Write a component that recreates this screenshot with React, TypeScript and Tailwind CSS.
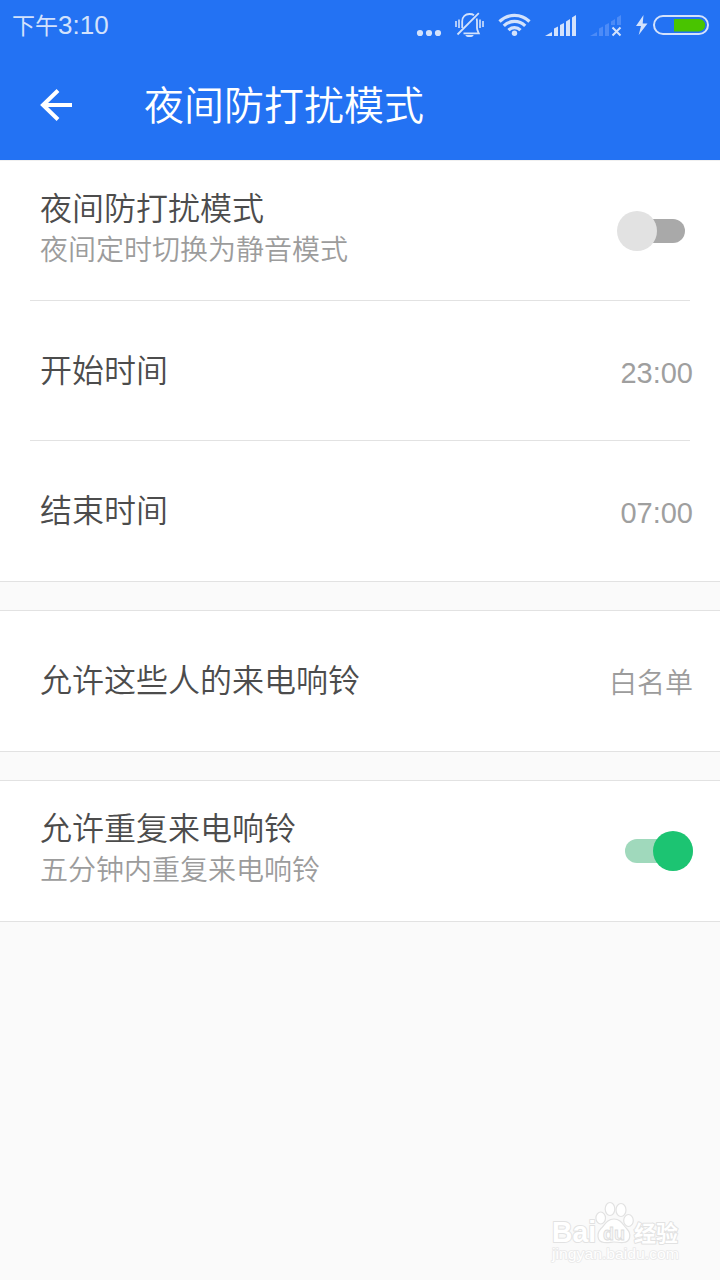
import React from "react";

function StatusIcons() {
  return (
    <svg width="304" height="50" viewBox="416 0 304 50" fill="none" className="shrink-0">
      <g fill="#d3e2fc">
        <circle cx="420" cy="33" r="3.1" />
        <circle cx="429" cy="33" r="3.1" />
        <circle cx="438" cy="33" r="3.1" />
        <path d="M465.5 35h8a4 2 0 0 1-8 0z" />
      </g>
      <g stroke="#d3e2fc" strokeWidth="1.8">
        <path d="M462.2 28V21.5C462.2 16.5 465.5 14 469.5 14c2 0 3.5.4 4.5 1.2M476.6 18.500c.3 1 .4 2 .4 3v6.500c0 2 1 3.500 1.800 5.300H463.500" />
        <path d="M457.5 34.5L478.800 13.200" />
        <path d="M456 21v6M459 19.500v8.500M480 19.500v8.500M483 21v6" strokeWidth="1.6" />
      </g>
      <circle cx="514.5" cy="33.300" r="2.700" fill="#d3e2fc" />
      <g stroke="#d3e2fc" strokeWidth="3.200">
        <path d="M499.5 21.500a21.500 21.500 0 0 1 30 0" />
        <path d="M503.800 25.800a15.300 15.300 0 0 1 21.400 0" />
        <path d="M508.500 30.200a8.500 8.500 0 0 1 12 0" />
      </g>
      <path fill="#d3e2fc" d="M545 36l7-4v4zM554 36v-7.500l4-2V36zM560 36V25l4-2v13zM566 36V21.500l4-2.500v17zM572 36V17.500l4-2.500v21z" />
      <path fill="#4c8bf7" d="M590 36l7-4v4zM599 36v-7.500l4-2V36zM605 36V25l4-2v13zM611 25v-3.500l4-2.500v6zM617 25v-7.500l4-2.500v10z" />
      <path stroke="#d3e2fc" strokeWidth="2" d="M612.500 27.500l8 8M620.500 27.500l-8 8" />
      <path fill="#d3e2fc" d="M643.500 15l-7.500 11h5l-2.300 9L647.500 23.500h-4.800z" />
      <rect x="654" y="16" width="54" height="18" rx="9" stroke="#d3e2fc" strokeWidth="2" />
      <path fill="#49c400" d="M674 19h25a6.200 6.200 0 0 1 0 12.400h-25z" />
    </svg>
  );
}

function Toggle({ on }: { on: boolean }) {
  return (
    <span className={`flex h-10 w-[76px] items-center ${on ? "justify-end" : "justify-start"}`}>
      {on ? (
        <>
          <span className="-mr-10 h-6 w-[68px] rounded-full bg-[#a0d9bc]" />
          <span className="z-10 size-10 shrink-0 rounded-full bg-[#1cc472]" />
        </>
      ) : (
        <>
          <span className="z-10 size-10 shrink-0 rounded-full bg-[#e2e2e2]" />
          <span className="-ml-8 h-6 w-[60px] rounded-full bg-[#a9a9a9]" />
        </>
      )}
    </span>
  );
}

function Row({ title, note, children }: { title: string; note?: string; children: React.ReactNode }) {
  return (
    <div className="flex h-[140px] items-center justify-between pr-[27px] pl-10">
      <div className="pb-[6px]">
        <div className="text-[32px] leading-[42px] text-[#4c4c4c]">{title}</div>
        {note && <div className="mb-[3px] text-[28px] leading-[42px] text-[#9c9c9c]">{note}</div>}
      </div>
      {children}
    </div>
  );
}

function Time({ value }: { value: string }) {
  return <span className="pt-1 font-['Liberation_Sans',sans-serif] text-[29px] leading-10 text-[#9f9f9f]">{value}</span>;
}

function Divider() {
  return <div className="mx-[30px] -mt-px h-px bg-[#e2e2e2]" />;
}

function Watermark() {
  return (
    <svg width="140" height="70" viewBox="545 1195 140 70" fill="#fff" stroke="#e2e2e2" strokeWidth="1.2">
      <g strokeWidth="2" paintOrder="stroke" strokeLinejoin="round" className="font-['Liberation_Sans','Noto_Sans_CJK_SC',sans-serif]">
        <text x="552" y="1242" fontSize="30" fontWeight="700" textLength="44" lengthAdjust="spacingAndGlyphs">Bai</text>
        <text x="634" y="1241" fontSize="22" fontWeight="700">经验</text>
        <text x="552" y="1259" fontSize="15" fontWeight="400" strokeWidth="1.6" stroke="#e9e9e9" textLength="127" lengthAdjust="spacingAndGlyphs">jingyan.baidu.com</text>
      </g>
      <ellipse cx="600.700" cy="1218" rx="4.800" ry="6" />
      <ellipse cx="610" cy="1209" rx="4.800" ry="6.500" />
      <ellipse cx="621" cy="1210" rx="5" ry="6.500" />
      <ellipse cx="628.500" cy="1220.500" rx="4.800" ry="6" />
      <path d="M614 1219c7 0 9 6 13 10s4.500 13-4 13.500c-4 .2-6-.5-9-.5s-6 1-10 .5c-8-1-7-10-3-14s6-9.500 13-9.500z" />
      <text x="603" y="1239.500" fontSize="19" fontWeight="700" fill="#f6f6f6" stroke="#dcdcdc" strokeWidth="0.8" className="font-['Liberation_Sans',sans-serif]" textLength="22" lengthAdjust="spacingAndGlyphs">du</text>
    </svg>
  );
}

export default function App() {
  return (
    <div className="flex h-[1280px] w-[720px] flex-col overflow-hidden bg-[#fafafa] font-['Noto_Sans_CJK_SC',sans-serif] font-[350]">
      <header className="h-40 bg-[#2372f3] text-white">
        <div className="flex h-[50px] items-center justify-between pl-3 text-[#d3e2fc]">
          <span className="flex items-baseline font-normal">
            <span className="text-[23px]">下午</span>
            <span className="font-['Liberation_Sans',sans-serif] text-[26px]">3:10</span>
          </span>
          <StatusIcons />
        </div>
        <div className="flex h-[110px] items-center pl-10">
          <svg width="32" height="32" viewBox="0 0 32 32" fill="none" stroke="#fff" strokeWidth="4">
            <path d="M32 16H3M18 1.500L3 16l15 14.500" />
          </svg>
          <h1 className="ml-[72px] pb-1 text-[40px] leading-none">夜间防打扰模式</h1>
        </div>
      </header>
      <section className="border-y border-t-[#f0f0f0] border-b-[#e2e2e2] bg-white">
        <Row title="夜间防打扰模式" note="夜间定时切换为静音模式"><Toggle on={false} /></Row>
        <Divider />
        <Row title="开始时间"><Time value="23:00" /></Row>
        <Divider />
        <Row title="结束时间"><Time value="07:00" /></Row>
      </section>
      <section className="mt-7 border-y border-[#e2e2e2] bg-white">
        <Row title="允许这些人的来电响铃"><span className="text-[28px] text-[#9c9c9c]">白名单</span></Row>
      </section>
      <section className="mt-7 border-y border-[#e2e2e2] bg-white">
        <Row title="允许重复来电响铃" note="五分钟内重复来电响铃"><Toggle on /></Row>
      </section>
      <footer className="mt-auto flex justify-end pr-[35px] pb-[15px]"><Watermark /></footer>
    </div>
  );
}
